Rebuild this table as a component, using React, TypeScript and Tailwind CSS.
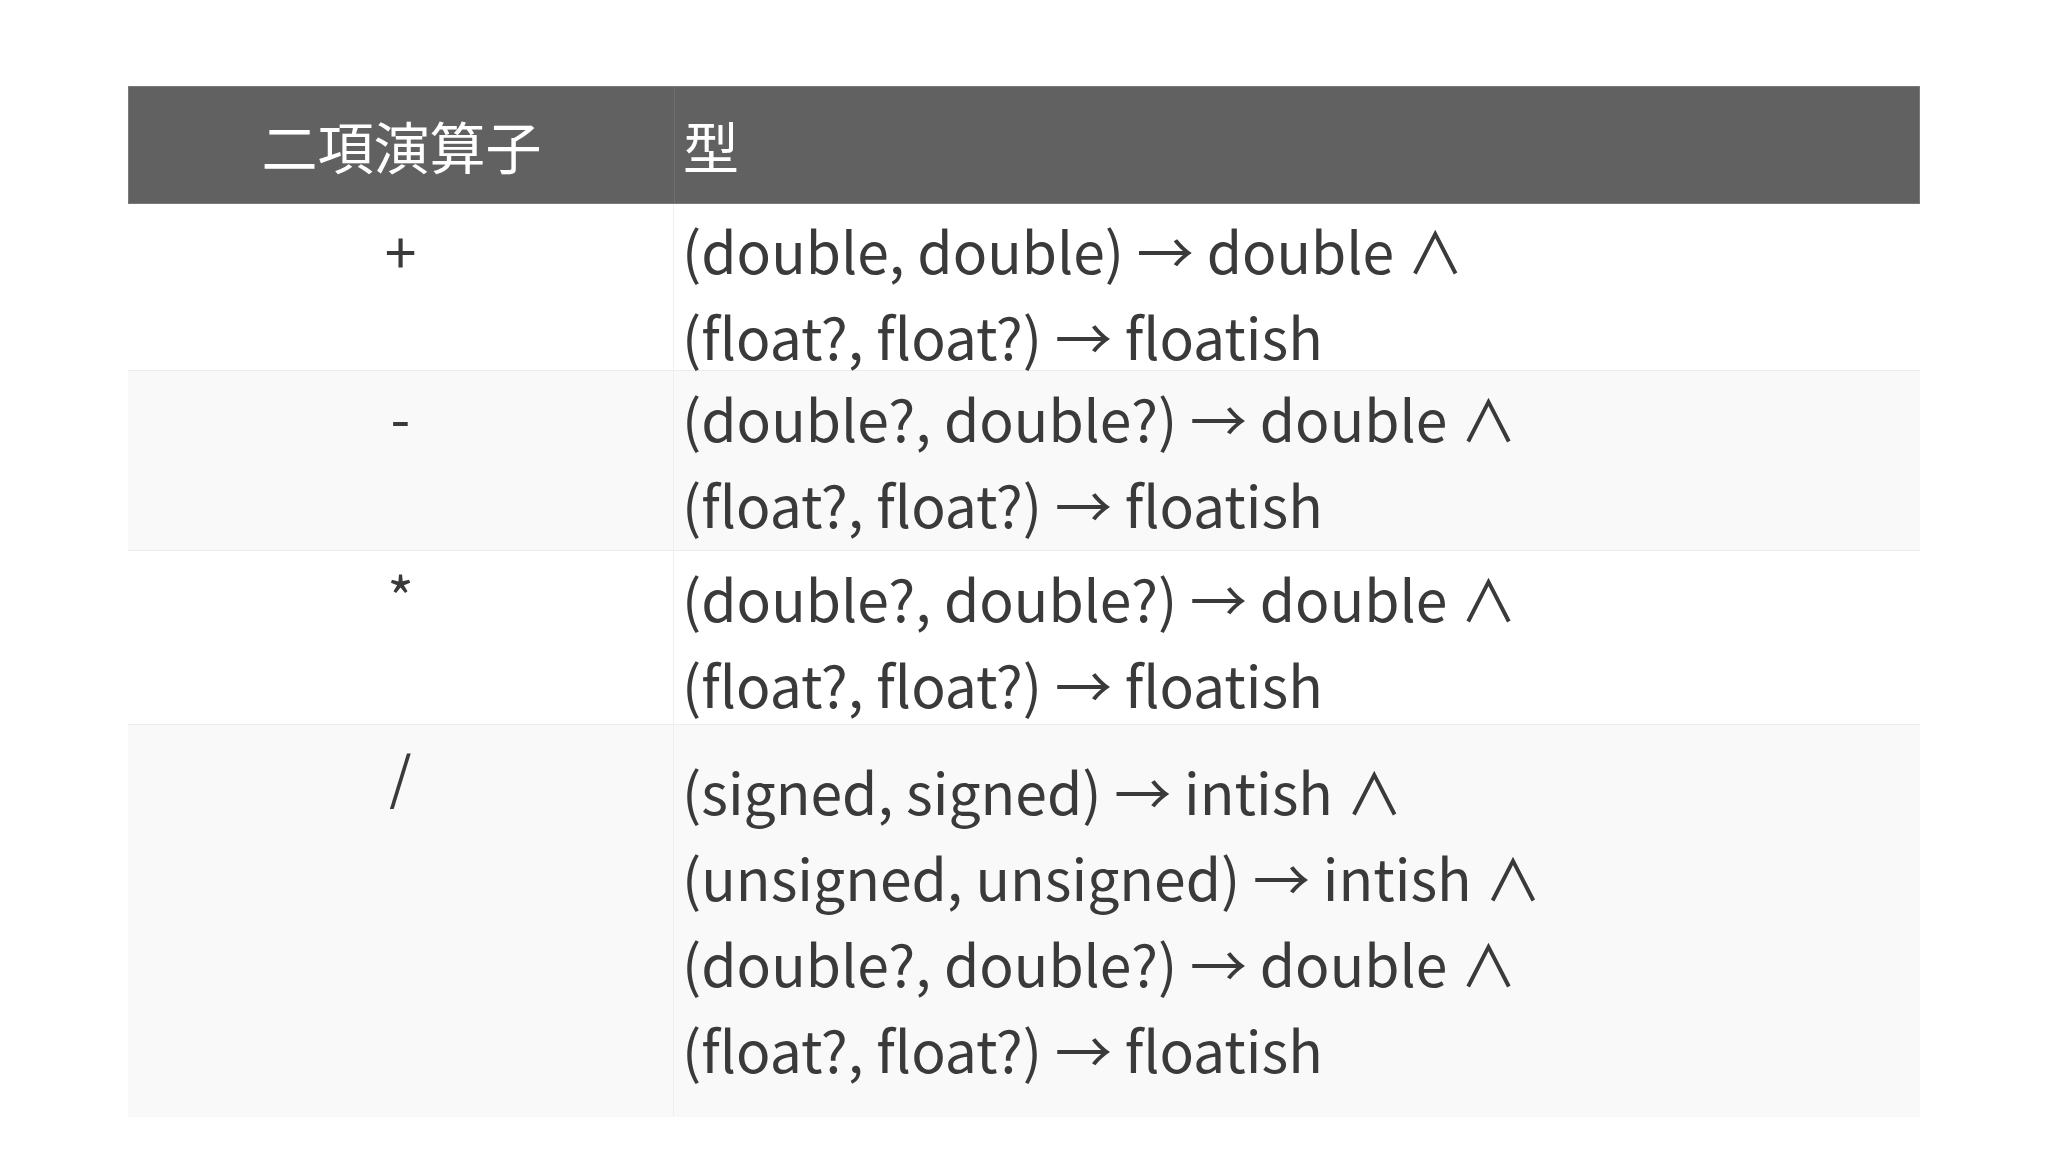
const rows = [
  {
    op: "+",
    lines: ["(double, double) → double ∧", "(float?, float?) → floatish"],
    h: "h-[167px]",
    pt: "pt-[2px]",
    opPt: "pt-[2px]",
    bg: "bg-white",
  },
  {
    op: "-",
    lines: ["(double?, double?) → double ∧", "(float?, float?) → floatish"],
    h: "h-[180px]",
    pt: "pt-[3px]",
    opPt: "pt-[1px]",
    bg: "bg-[#f9f9f9]",
  },
  {
    op: "*",
    lines: ["(double?, double?) → double ∧", "(float?, float?) → floatish"],
    h: "h-[174px]",
    pt: "pt-[3px]",
    opPt: "pt-[1px]",
    bg: "bg-white",
  },
  {
    op: "/",
    lines: [
      "(signed, signed) → intish ∧",
      "(unsigned, unsigned) → intish ∧",
      "(double?, double?) → double ∧",
      "(float?, float?) → floatish",
    ],
    h: "h-[392px]",
    pt: "pt-[22px]",
    opPt: "pt-[6px]",
    bg: "bg-[#f9f9f9]",
  },
];

export default function App() {
  return (
    <div
      className="w-[2048px] h-[1152px] bg-white px-[128px] pt-[86px] text-[#3a3a3a]"
      style={{ fontFamily: '"Noto Sans CJK JP", "Noto Sans", sans-serif' }}
    >
      <div className="grid grid-cols-[546px_1fr] h-[118px] bg-[#616161] border border-[#7a7a7a] text-white text-[56px]">
        <div className="flex items-center justify-center border-r border-[#6e6e6e]">二項演算子</div>
        <div className="flex items-center pl-[8px]">型</div>
      </div>
      {rows.map((row, i) => (
        <div
          key={i}
          className={`grid grid-cols-[546px_1fr] ${row.h} ${row.bg} ${i < rows.length - 1 ? "border-b border-[#ececec]" : ""}`}
        >
          <div className={`text-center text-[57px] leading-[86px] border-r border-[#efefef] ${row.opPt}`}>
            {row.op}
          </div>
          <div className={`pl-[8px] text-[57px] leading-[86px] ${row.pt}`}>
            {row.lines.map((line, j) => (
              <div key={j}>{line}</div>
            ))}
          </div>
        </div>
      ))}
    </div>
  );
}
